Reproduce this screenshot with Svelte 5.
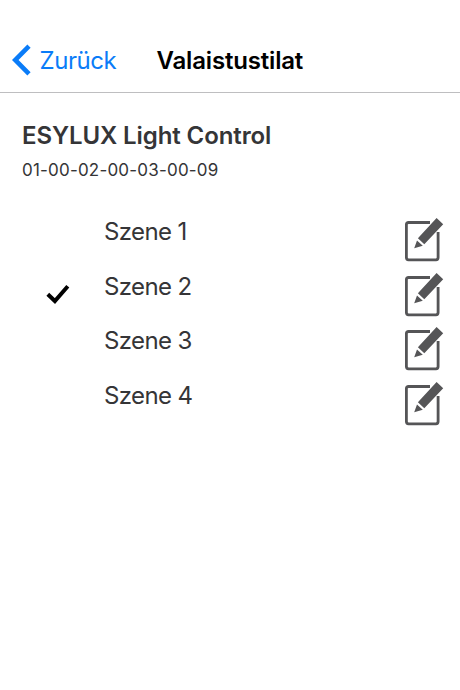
<script lang="ts">
	type Scene = { id: number; name: string };

	const scenes: Scene[] = [
		{ id: 1, name: 'Szene 1' },
		{ id: 2, name: 'Szene 2' },
		{ id: 3, name: 'Szene 3' },
		{ id: 4, name: 'Szene 4' }
	];

	let active: number = $state(2);
</script>

<div class="screen">
	<header>
		<button class="back">
			<svg width="20" height="32" viewBox="0 0 20 32">
				<path d="M17 2.2 3.2 16 17 29.8" fill="none" stroke="#0a7cf8" stroke-width="4.6" />
			</svg>
			<span>Zurück</span>
		</button>
		<h1>Valaistustilat</h1>
	</header>

	<section class="device">
		<h2>ESYLUX Light Control</h2>
		<p>01-00-02-00-03-00-09</p>
	</section>

	<ul>
		{#each scenes as scene (scene.id)}
			<li>
				<span class="mark">
					{#if scene.id === active}
						<svg width="24" height="20" viewBox="0 0 24 20">
							<path d="M1.8 10.2 8.9 17 21.8 2.2" fill="none" stroke="#000" stroke-width="4" />
						</svg>
					{/if}
				</span>
				<button class="name" onclick={() => (active = scene.id)}>{scene.name}</button>
				<button class="edit" aria-label="Edit">
					<svg width="40" height="46" viewBox="0 0 40 46">
						<path
							d="M26 5.5H4.5Q2.4 5.5 2.4 7.6V40.6Q2.4 42.8 4.5 42.8H32Q34.1 42.8 34.1 40.6V15"
							fill="none"
							stroke="#555557"
							stroke-width="2.8"
						/>
						<path
							d="M32.6.9 39.2 7.3 20.3 27.3 13.9 21.2ZM13 23.4 18.8 28.8 10.2 31.2Z"
							fill="#555557"
						/>
					</svg>
				</button>
			</li>
		{/each}
	</ul>
</div>

<style>
	:global(body) {
		margin: 0;
		background: #fff;
	}

	.screen {
		height: 690px;
		overflow: hidden;
		font-family: Inter, 'Liberation Sans', sans-serif;
		color: #353537;
	}

	button {
		padding: 0;
		border: 0;
		background: none;
		font: inherit;
		color: inherit;
		text-align: left;
	}

	header {
		display: grid;
		grid-template-columns: 145px 1fr;
		align-items: center;
		box-sizing: border-box;
		height: 93px;
		padding: 28px 0 0 11.5px;
		border-bottom: 1px solid #bebec0;
	}

	.back {
		display: flex;
		align-items: center;
		gap: 8px;
		color: #0a7cf8;
		font-size: 24px;
		letter-spacing: -0.45px;
	}

	h1 {
		margin: 0;
		color: #000;
		font-size: 24px;
		font-weight: 600;
		letter-spacing: -0.17px;
	}

	.device {
		padding: 28px 22px 0;
	}

	h2 {
		margin: 0;
		font-size: 24px;
		line-height: 30px;
		font-weight: 600;
		letter-spacing: -0.1px;
	}

	p {
		margin: 9px 0 0;
		font-size: 17px;
		line-height: 20px;
		letter-spacing: 0.2px;
	}

	ul {
		margin: 0;
		padding: 37px 16px 0 44px;
		list-style: none;
	}

	li {
		display: grid;
		grid-template-columns: 60px 1fr 40px;
		height: 54.7px;
	}

	.mark {
		padding: 12px 0 0 1.5px;
	}

	.name {
		align-self: start;
		font-size: 24px;
		line-height: 30px;
		letter-spacing: -0.6px;
	}

	.edit {
		align-self: start;
	}

	svg {
		display: block;
	}
</style>
